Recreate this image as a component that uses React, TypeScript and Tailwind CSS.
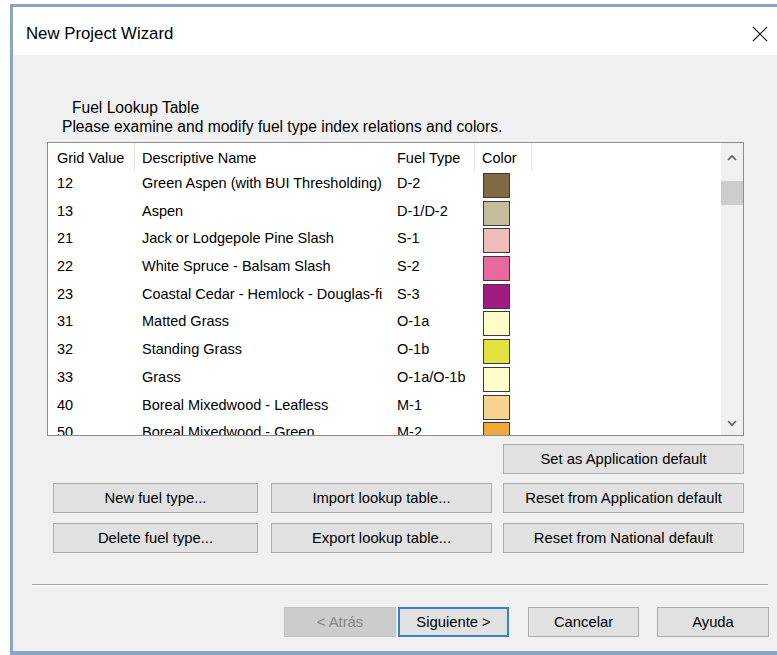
import React from "react";

type FuelRow = {
  grid: string;
  name: string;
  fuel: string;
  color: string;
};

const fuelRows: FuelRow[] = [
  { grid: "12", name: "Green Aspen (with BUI Thresholding)", fuel: "D-2", color: "#7f6a43" },
  { grid: "13", name: "Aspen", fuel: "D-1/D-2", color: "#c4bd9b" },
  { grid: "21", name: "Jack or Lodgepole Pine Slash", fuel: "S-1", color: "#efbcba" },
  { grid: "22", name: "White Spruce - Balsam Slash", fuel: "S-2", color: "#e8699d" },
  { grid: "23", name: "Coastal Cedar - Hemlock - Douglas-fir Slash", fuel: "S-3", color: "#a01c80" },
  { grid: "31", name: "Matted Grass", fuel: "O-1a", color: "#fffdc7" },
  { grid: "32", name: "Standing Grass", fuel: "O-1b", color: "#e4e23e" },
  { grid: "33", name: "Grass", fuel: "O-1a/O-1b", color: "#fffdc9" },
  { grid: "40", name: "Boreal Mixedwood - Leafless", fuel: "M-1", color: "#f6d390" },
  { grid: "50", name: "Boreal Mixedwood - Green", fuel: "M-2", color: "#f3a83a" },
];

function WinButton({
  label,
  width,
  variant = "normal",
}: {
  label: string;
  width: string;
  variant?: "normal" | "focused" | "disabled";
}) {
  const look =
    variant === "disabled"
      ? "bg-[#cccccc] border border-[#c4c4c4] text-[#858585]"
      : variant === "focused"
        ? "bg-[#e1e1e1] border-2 border-[#3b80cc] text-black"
        : "bg-[#e1e1e1] border border-[#adadad] text-black";
  return (
    <button className={`${width} h-[30px] shrink-0 flex items-center justify-center leading-[20px] text-[14.8px] ${look}`}>
      {label}
    </button>
  );
}

function Chevron({ down = false }: { down?: boolean }) {
  return (
    <svg width="12" height="8" viewBox="0 0 12 8">
      <path
        d={down ? "M2 2 L6 6 L10 2" : "M2 6 L6 2 L10 6"}
        fill="none"
        stroke="#606060"
        strokeWidth="1.6"
      />
    </svg>
  );
}

export default function App() {
  return (
    <div className="w-[777px] h-[655px] overflow-hidden bg-white font-['Liberation_Sans',Arial,sans-serif] text-[14.5px] text-black">
      <div className="ml-[10px] mt-[4px] w-[790px] h-[651px] flex flex-col border-[#8ea4c6] border-l-[3px] border-t-[3px] border-r-[3px] border-b-[4px]">
        {/* Title bar */}
        <div className="h-[48px] shrink-0 bg-white flex items-start justify-between pl-[13px] pr-[29px] pt-[17px]">
          <span className="text-[16.8px] leading-[20px]">New Project Wizard</span>
          <svg width="16" height="16" viewBox="0 0 16 16" className="mt-[2px]">
            <path d="M1 1 L15 15 M15 1 L1 15" stroke="#1a1a1a" strokeWidth="1.2" />
          </svg>
        </div>

        {/* Wizard page */}
        <div className="flex-1 bg-[#f0f0f0] flex flex-col pt-[43px]">
          <div className="ml-[59px] leading-[19px] text-[15.6px]">Fuel Lookup Table</div>
          <div className="ml-[49px] leading-[19px] text-[15.6px]">Please examine and modify fuel type index relations and colors.</div>

          {/* Lookup list */}
          <div className="ml-[34px] mt-[6px] w-[697px] h-[294px] shrink-0 bg-white border border-[#8c8c8c] flex overflow-hidden">
            <div className="flex-1 flex flex-col overflow-hidden">
              <div className="h-[28px] shrink-0 flex leading-[20px]">
                <div className="w-[87px] pl-[9px] pt-[5px] border-r border-[#e5e5e5] whitespace-nowrap">Grid Value</div>
                <div className="w-[255px] pl-[7px] pt-[5px] whitespace-nowrap">Descriptive Name</div>
                <div className="w-[85px] pl-[7px] pt-[5px] border-r border-[#e5e5e5] whitespace-nowrap">Fuel Type</div>
                <div className="w-[57px] pl-[7px] pt-[5px] border-r border-[#e5e5e5]">Color</div>
              </div>
              {fuelRows.map((row) => (
                <div key={row.grid} className="h-[27.7px] shrink-0 flex items-start leading-[20px]">
                  <div className="w-[87px] pl-[9px] pt-[2px]">{row.grid}</div>
                  <div className="w-[255px] pl-[7px] pr-[7px] pt-[2px]">
                    <div className="overflow-hidden whitespace-nowrap">{row.name}</div>
                  </div>
                  <div className="w-[85px] pl-[7px] pt-[2px] whitespace-nowrap">{row.fuel}</div>
                  <div className="w-[57px] pl-[8px] pt-[2px]">
                    <div
                      className="w-[27px] h-[25px] border border-[#3a3a3a]"
                      style={{ backgroundColor: row.color }}
                    />
                  </div>
                </div>
              ))}
            </div>

            {/* Vertical scrollbar */}
            <div className="w-[22px] shrink-0 bg-[#f0f0f0] flex flex-col">
              <div className="h-[30px] flex items-center justify-center">
                <Chevron />
              </div>
              <div className="mt-[8px] h-[24px] bg-[#cdcdcd]" />
              <div className="flex-1" />
              <div className="h-[24px] flex items-center justify-center">
                <Chevron down />
              </div>
            </div>
          </div>

          {/* Table actions */}
          <div className="ml-[34px] mt-[8px] w-[697px] flex flex-col">
            <div className="flex justify-end">
              <WinButton label="Set as Application default" width="w-[241px]" />
            </div>
            <div className="mt-[9px] flex pl-[6px]">
              <WinButton label="New fuel type..." width="w-[205px]" />
              <div className="ml-[13px]">
                <WinButton label="Import lookup table..." width="w-[221px]" />
              </div>
              <div className="ml-[11px]">
                <WinButton label="Reset from Application default" width="w-[241px]" />
              </div>
            </div>
            <div className="mt-[10px] flex pl-[6px]">
              <WinButton label="Delete fuel type..." width="w-[205px]" />
              <div className="ml-[13px]">
                <WinButton label="Export lookup table..." width="w-[221px]" />
              </div>
              <div className="ml-[11px]">
                <WinButton label="Reset from National default" width="w-[241px]" />
              </div>
            </div>
          </div>

          {/* Etched separator */}
          <div className="ml-[19px] mt-[31px] w-[736px] h-[2px] border-t border-[#a0a0a0] border-b border-b-white" />

          {/* Wizard navigation */}
          <div className="ml-[271px] mt-[21px] flex">
            <WinButton label="< Atrás" width="w-[112px]" variant="disabled" />
            <div className="ml-[2px]">
              <WinButton label="Siguiente >" width="w-[111px]" variant="focused" />
            </div>
            <div className="ml-[19px]">
              <WinButton label="Cancelar" width="w-[111px]" />
            </div>
            <div className="ml-[18px]">
              <WinButton label="Ayuda" width="w-[112px]" />
            </div>
          </div>
        </div>
      </div>
    </div>
  );
}
